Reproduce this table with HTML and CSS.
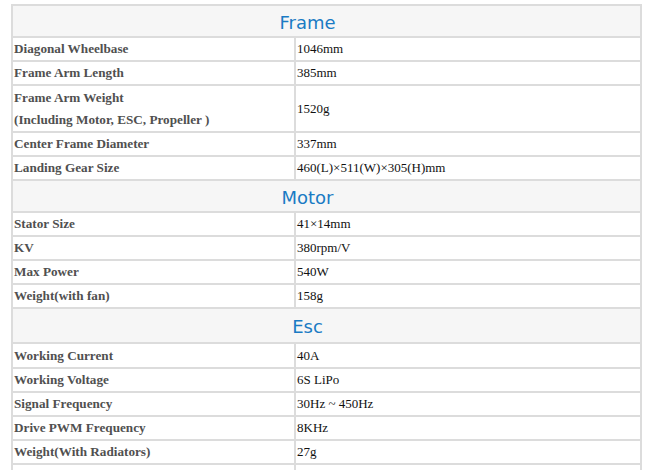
FILE: index.html
```html
<!DOCTYPE html>
<html>
<head>
<meta charset="utf-8">
<link rel="stylesheet" href="styles.css">
</head>
<body>
<table class="spec">
  <colgroup><col class="c-label"><col class="c-value"></colgroup>
  <tr class="head h32"><th colspan="2">Frame</th></tr>
  <tr class="r24"><td class="lbl">Diagonal Wheelbase</td><td class="val">1046mm</td></tr>
  <tr class="r24"><td class="lbl">Frame Arm Length</td><td class="val">385mm</td></tr>
  <tr class="r47"><td class="lbl two">Frame Arm Weight<br>(Including Motor, ESC, Propeller )</td><td class="val">1520g</td></tr>
  <tr class="r23"><td class="lbl">Center Frame Diameter</td><td class="val">337mm</td></tr>
  <tr class="r24"><td class="lbl">Landing Gear Size</td><td class="val">460(L)×511(W)×305(H)mm</td></tr>
  <tr class="head h32"><th colspan="2">Motor</th></tr>
  <tr class="r24"><td class="lbl">Stator Size</td><td class="val">41×14mm</td></tr>
  <tr class="r24"><td class="lbl">KV</td><td class="val">380rpm/V</td></tr>
  <tr class="r24"><td class="lbl">Max Power</td><td class="val">540W</td></tr>
  <tr class="r24"><td class="lbl">Weight(with fan)</td><td class="val">158g</td></tr>
  <tr class="head h35"><th colspan="2">Esc</th></tr>
  <tr class="r25"><td class="lbl">Working Current</td><td class="val">40A</td></tr>
  <tr class="r24"><td class="lbl">Working Voltage</td><td class="val">6S LiPo</td></tr>
  <tr class="r24"><td class="lbl">Signal Frequency</td><td class="val">30Hz ~ 450Hz</td></tr>
  <tr class="r24"><td class="lbl">Drive PWM Frequency</td><td class="val">8KHz</td></tr>
  <tr class="r24"><td class="lbl">Weight(With Radiators)</td><td class="val">27g</td></tr>
  <tr class="r24"><td class="lbl">&nbsp;</td><td class="val">&nbsp;</td></tr>
</table>
</body>
</html>
```

FILE: styles.css
```css
html, body {
  margin: 0;
  padding: 0;
  background: #ffffff;
}
body {
  padding: 4px 0 0 11px;
  font-family: "Liberation Serif", "Times New Roman", serif;
  font-size: 13px;
}
.spec {
  border-collapse: collapse;
  width: 629px;
  table-layout: fixed;
  border: 2px solid #dcdcdc;
}
.c-label { width: 283px; }
.c-value { width: 346px; }
.spec td, .spec th {
  border: 2px solid #dcdcdc;
  padding: 0 1px;
  vertical-align: middle;
  line-height: 22px;
}
.head th {
  background: #f6f6f6;
  color: #1a7bc4;
  font-family: "DejaVu Sans", "Liberation Sans", sans-serif;
  font-weight: normal;
  font-size: 18px;
  text-align: center;
  padding: 3px 38px 0 0;
}
.h32 { height: 32px; }
.h35 { height: 35px; }
.r23 { height: 23px; }
.r24 { height: 24px; }
.r25 { height: 25px; }
.r47 { height: 47px; }
.lbl {
  font-weight: bold;
  color: #505050;
  font-size: 13.2px;
}
.lbl.two { line-height: 22px; }
.val {
  color: #111111;
}
```
